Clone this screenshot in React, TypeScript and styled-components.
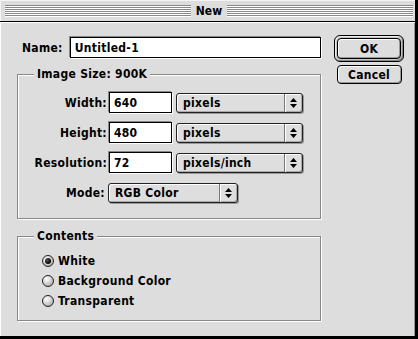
import React from 'react'
import styled, {createGlobalStyle} from 'styled-components'

const GlobalStyle = createGlobalStyle`
  html, body {
    margin: 0;
    padding: 0;
    background: #fff;
  }
  body {
    font-family: 'DejaVu Sans Condensed', 'DejaVu Sans', sans-serif;
    font-weight: bold;
    font-size: 12px;
    color: #000;
  }
`

const Window = styled.div`
  width: 418px;
  height: 339px;
  box-sizing: border-box;
  background: #dddddd;
  border-right: 3px solid #000;
  border-bottom: 3px solid #000;
  display: flex;
  flex-direction: column;
`

const TitleBar = styled.div`
  height: 21px;
  border-bottom: 1px solid #000;
  display: flex;
  align-items: center;
  padding: 0 2px 0 5px;
  background: #dddddd;
  box-shadow: inset 1px 1px 0 #f4f4f4;
`

const TitleLines = styled.div`
  flex: 1;
  height: 12px;
  margin-top: 1px;
  background: repeating-linear-gradient(to bottom, #888 0 1px, #fff 1px 2px);
`

const Title = styled.span`
  padding: 0 5px;
  line-height: 14px;
`

const Body = styled.div`
  flex: 1;
  display: flex;
  padding: 15px 0 0 17px;
  box-shadow: inset 1px 1px 0 #fff, inset -1px 0 0 #999;
`

const LeftCol = styled.div`
  width: 304px;
  display: flex;
  flex-direction: column;
`

const RightCol = styled.div`
  margin-left: 13px;
  margin-top: -2px;
  display: flex;
  flex-direction: column;
  align-items: center;
  width: 70px;
`

const Row = styled.div<{ $indent?: number }>`
  display: flex;
  align-items: center;
  height: 21px;
  padding-left: ${p => p.$indent || 0}px;
`

const Label = styled.span<{ $width?: number }>`
  display: inline-block;
  width: ${p => (p.$width ? `${p.$width}px` : 'auto')};
  text-align: right;
  white-space: nowrap;
  letter-spacing: 0.3px;
`

const Field = styled.div<{ $width: number; $gap?: number }>`
  box-sizing: border-box;
  width: ${p => p.$width}px;
  height: 21px;
  margin-left: ${p => p.$gap || 0}px;
  background: #fff;
  border: 1px solid #000;
  box-shadow: -1px -1px 0 #888, 1px 1px 0 #fff;
  padding: 0 4px;
  display: flex;
  align-items: center;
  letter-spacing: 0.3px;
`

const Group = styled.div<{ $height: number; $top: number }>`
  position: relative;
  box-sizing: border-box;
  height: ${p => p.$height}px;
  margin-top: ${p => p.$top}px;
  border: 1px solid #888;
  box-shadow: 1px 1px 0 #fff, inset 1px 1px 0 #fff;
`

const Legend = styled.span`
  position: absolute;
  top: -8px;
  left: 16px;
  padding: 0 3px;
  background: #dddddd;
  line-height: 15px;
  letter-spacing: 0.3px;
`

const Rows = styled.div<{ $pad: string; $gap: number }>`
  display: flex;
  flex-direction: column;
  gap: ${p => p.$gap}px;
  padding: ${p => p.$pad};
`

const Popup = styled.div<{ $width: number; $gap?: number }>`
  box-sizing: border-box;
  width: ${p => p.$width}px;
  height: 20px;
  margin-left: ${p => p.$gap || 0}px;
  border: 1px solid #222;
  border-radius: 3px;
  background: #dedede;
  box-shadow: inset 1px 1px 0 #fff, inset -1px -1px 0 #aaa, 1px 1px 0 #999;
  display: flex;
  align-items: stretch;
`

const PopupText = styled.span`
  flex: 1;
  padding-left: 6px;
  display: flex;
  align-items: center;
  letter-spacing: 0.3px;
`

const PopupArrow = styled.span`
  width: 17px;
  border-left: 1px solid #777;
  box-shadow: inset 1px 0 0 #fff;
  display: flex;
  align-items: center;
  justify-content: center;
`

const RadioRow = styled.div`
  display: flex;
  align-items: center;
  height: 20px;
  gap: 4px;
  letter-spacing: 0.3px;
`

const RadioDot = styled.span<{ $on?: boolean }>`
  box-sizing: border-box;
  width: 12px;
  height: 12px;
  border-radius: 50%;
  border: 1px solid #222;
  background: radial-gradient(circle at 35% 30%, #fff 0, #e4e4e4 30%, #a8a8a8 85%);
  display: flex;
  align-items: center;
  justify-content: center;
  &::after {
    content: '';
    display: ${p => (p.$on ? 'block' : 'none')};
    width: 6px;
    height: 6px;
    border-radius: 50%;
    background: radial-gradient(circle at 35% 35%, #555 0, #000 70%);
  }
`

const DefaultRing = styled.div`
  box-sizing: border-box;
  width: 70px;
  height: 27px;
  border: 1px solid #000;
  border-radius: 6px;
  background: #c4c4c4;
  box-shadow: inset 1px 1px 0 #eee, inset -1px -1px 0 #888;
  padding: 2px;
  display: flex;
`

const Button = styled.div<{ $width?: number; $height?: number; $top?: number }>`
  box-sizing: border-box;
  width: ${p => (p.$width ? `${p.$width}px` : '100%')};
  height: ${p => (p.$height ? `${p.$height}px` : '100%')};
  margin-top: ${p => p.$top || 0}px;
  border: 1px solid #000;
  border-radius: 4px;
  background: #dddddd;
  box-shadow: inset 1px 1px 0 #fff, inset -1px -1px 0 #999;
  display: flex;
  align-items: center;
  justify-content: center;
  letter-spacing: 0.3px;
`

const Arrows = () => (
  <svg width="7" height="10" viewBox="0 0 7 10">
    <path d="M3.5 0 L7 4 L0 4 Z" fill="#000"/>
    <path d="M0 6 L7 6 L3.5 10 Z" fill="#000"/>
  </svg>
)

const SizeRow = ({label, value, unit}: { label: string; value: string; unit: string }) => (
  <Row>
    <Label $width={89}>{label}</Label>
    <Field $width={63} $gap={2}>{value}</Field>
    <Popup $width={127} $gap={4}>
      <PopupText>{unit}</PopupText>
      <PopupArrow><Arrows/></PopupArrow>
    </Popup>
  </Row>
)

const App = () => {
    const contents = ['White', 'Background Color', 'Transparent'];
    return (
        <>
            <GlobalStyle/>
            <Window>
                <TitleBar>
                    <TitleLines/>
                    <Title>New</Title>
                    <TitleLines/>
                </TitleBar>
                <Body>
                    <LeftCol>
                        <Row $indent={5}>
                            <Label>Name:</Label>
                            <Field $width={253} $gap={7}>Untitled-1</Field>
                        </Row>
                        <Group $height={145} $top={16}>
                            <Legend>Image Size: 900K</Legend>
                            <Rows $pad="17px 0 0 0" $gap={9}>
                                <SizeRow label="Width:" value="640" unit="pixels"/>
                                <SizeRow label="Height:" value="480" unit="pixels"/>
                                <SizeRow label="Resolution:" value="72" unit="pixels/inch"/>
                                <Row>
                                    <Label $width={87}>Mode:</Label>
                                    <Popup $width={130} $gap={3}>
                                        <PopupText>RGB Color</PopupText>
                                        <PopupArrow><Arrows/></PopupArrow>
                                    </Popup>
                                </Row>
                            </Rows>
                        </Group>
                        <Group $height={85} $top={17}>
                            <Legend>Contents</Legend>
                            <Rows $pad="14px 0 0 24px" $gap={0}>
                                {contents.map((c, i) => (
                                    <RadioRow key={c}>
                                        <RadioDot $on={i === 0}/>
                                        {c}
                                    </RadioRow>
                                ))}
                            </Rows>
                        </Group>
                    </LeftCol>
                    <RightCol>
                        <DefaultRing>
                            <Button>OK</Button>
                        </DefaultRing>
                        <Button $width={65} $height={19} $top={3}>Cancel</Button>
                    </RightCol>
                </Body>
            </Window>
        </>
    )
}

export default App;
